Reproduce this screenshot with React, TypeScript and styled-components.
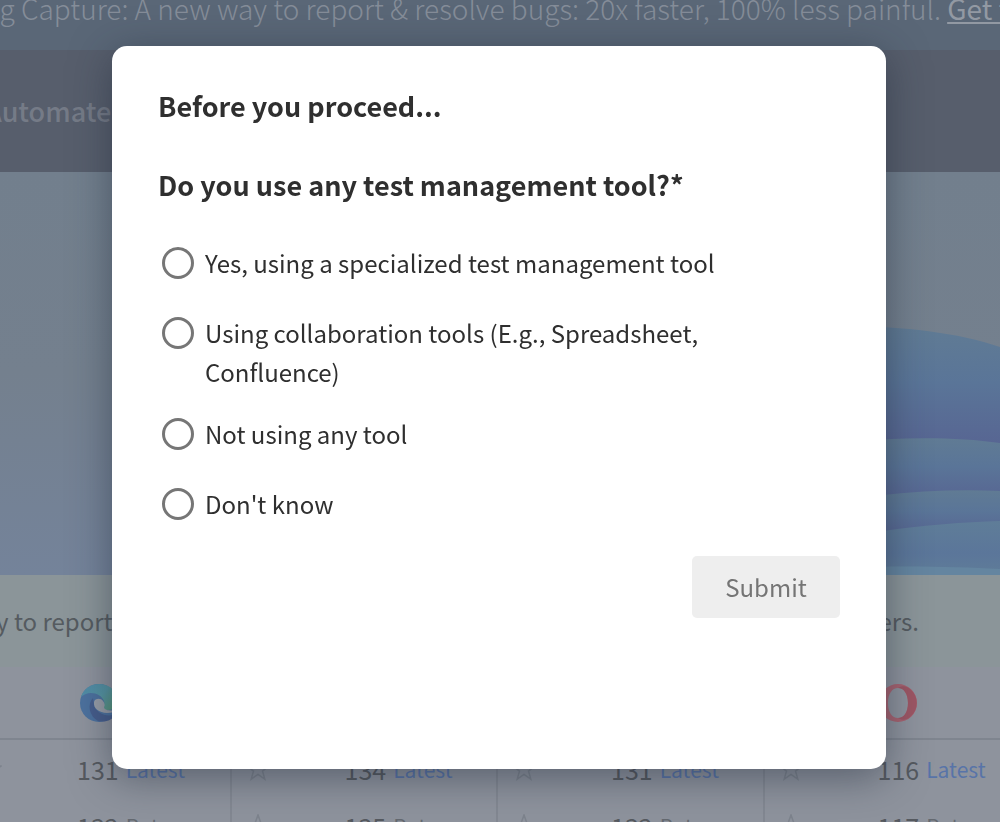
import React, { useState } from "react";
import styled, { createGlobalStyle } from "styled-components";

const GlobalStyle = createGlobalStyle`
  * { box-sizing: border-box; }
  body {
    margin: 0;
    background: #8e939d;
    color: #55595f;
    font-family: "Noto Sans CJK SC", "Open Sans", sans-serif;
  }
`;

const Page = styled.div`
  height: 100vh;
  overflow: hidden;
`;

const Banner = styled.div`
  display: flex;
  align-items: flex-end;
  height: 50px;
  padding-bottom: 22px;
  background: #5a6777;
  color: #858d99;
  font-size: 28px;
  line-height: 40px;
  font-weight: 300;
  white-space: nowrap;
`;

const BannerText = styled.p`
  margin: 0 0 0 -35px;
`;

const BannerLink = styled.a`
  color: #9299a3;
  font-weight: 400;
  text-decoration: underline;
`;

const Nav = styled.nav`
  display: flex;
  align-items: center;
  height: 122px;
  background: #575e6c;
`;

const NavLink = styled.a`
  margin-left: -15px;
  color: #757b87;
  font-size: 27px;
  line-height: 40px;
  font-weight: 500;
  text-decoration: none;
`;

const Hero = styled.section`
  display: flex;
  justify-content: flex-end;
  align-items: flex-end;
  height: 403px;
  background: linear-gradient(#727f8d, #74808e 50%, #74839a);
`;

const Strip = styled.p`
  display: flex;
  justify-content: space-between;
  margin: 0;
  padding: 26px 81px 26px 0;
  background: #8b9599;
  color: #555b60;
  font-size: 24px;
  line-height: 40px;
  white-space: nowrap;
`;

const StripLead = styled.span`
  margin-left: -4px;
`;

const VersionTable = styled.table`
  width: calc(100% + 67px);
  margin-left: -36px;
  border-collapse: collapse;
  table-layout: fixed;
`;

const LogoCell = styled.th`
  height: 72px;
  padding: 0 0 0 115px;
  border-bottom: 2px solid #7f858f;
  text-align: left;
  vertical-align: middle;
  svg { display: block; }
`;

const VersionCell = styled.td`
  padding: 0;
  border-right: 2px solid #838892;
`;

const Version = styled.div`
  display: flex;
  align-items: center;
  height: 57px;
  padding: 1px 0 0 14px;
  svg { margin-right: 75px; }
`;

const VersionNumber = styled.span`
  margin-right: 7px;
  font-size: 25px;
  line-height: 40px;
`;

const VersionTag = styled.span<{ $latest?: boolean }>`
  color: ${(p) => (p.$latest ? "#5874a8" : "#646970")};
  font-size: 21px;
  line-height: 40px;
`;

const Overlay = styled.div`
  position: fixed;
  inset: 0;
  display: flex;
  justify-content: center;
  align-items: flex-start;
  padding: 46px 114px 53px 112px;
`;

const Dialog = styled.form`
  display: flex;
  flex-direction: column;
  width: 100%;
  max-width: 880px;
  min-height: 100%;
  padding: 40px 46px;
  border-radius: 15px;
  background: #fff;
  box-shadow: 0 8px 40px rgba(30, 40, 55, 0.5);
  color: #2f2f2f;
`;

const Title = styled.h1`
  margin: 0 0 39px;
  font-size: 27px;
  line-height: 40px;
  font-weight: 700;
`;

const Question = styled.fieldset`
  display: flex;
  flex-direction: column;
  min-width: 0;
  margin: 0;
  padding: 0;
  border: 0;
`;

const Legend = styled.legend`
  padding: 0;
  margin-bottom: 38px;
  font-size: 27px;
  line-height: 40px;
  font-weight: 700;
`;

const Option = styled.label<{ $tight?: boolean }>`
  display: flex;
  align-items: flex-start;
  gap: 11px;
  margin-bottom: ${(p) => (p.$tight ? "23px" : "31px")};
  padding: 0 40px 0 4px;
  font-size: 24px;
  line-height: 39px;
`;

const Radio = styled.input`
  appearance: none;
  flex: none;
  width: 32px;
  height: 32px;
  margin: 4px 0 0;
  border: 3px solid #767676;
  border-radius: 50%;
  background: #fff;
  &:checked { box-shadow: inset 0 0 0 5px #fff; background: #767676; }
`;

const SubmitButton = styled.button`
  align-self: flex-end;
  width: 148px;
  height: 62px;
  margin-top: 2px;
  border: 0;
  border-radius: 5px;
  background: #eee;
  color: #757575;
  font-family: inherit;
  font-size: 24px;
  line-height: 40px;
`;

const Waves = () => (
  <svg width="260" height="250" viewBox="0 0 260 250" aria-hidden="true">
    <defs>
      <linearGradient id="wave" x1="0" y1="0" x2="0" y2="1">
        <stop offset="0" stopColor="#607b94" />
        <stop offset="0.45" stopColor="#5a7598" />
        <stop offset="1" stopColor="#576492" />
      </linearGradient>
      <linearGradient id="base" x1="0" y1="0" x2="0" y2="1">
        <stop offset="0" stopColor="#5f7d98" />
        <stop offset="0.6" stopColor="#5b769a" />
        <stop offset="1" stopColor="#5f7c98" />
      </linearGradient>
    </defs>
    <path fill="url(#wave)" d="M0 10C80 -4 190 -2 260 22V126H0Z" />
    <path fill="url(#wave)" d="M0 134C90 114 190 108 260 118V176H0Z" />
    <path fill="url(#wave)" d="M0 194C90 174 180 162 260 166V212H0Z" />
    <path fill="url(#base)" d="M0 232C90 212 180 198 260 196V250H0Z" />
    <path fill="#6485a0" d="M0 250C90 240 190 240 260 244V250Z" />
  </svg>
);

const EdgeLogo = () => (
  <svg width="40" height="40" viewBox="0 0 40 40" role="img" aria-label="Edge">
    <defs>
      <linearGradient id="edgeTop" x1="0" y1="0" x2="1" y2="0.6">
        <stop offset="0" stopColor="#4f88a8" />
        <stop offset="0.6" stopColor="#5595a3" />
        <stop offset="1" stopColor="#58967f" />
      </linearGradient>
    </defs>
    <circle cx="20" cy="20" r="19" fill="#4c719e" />
    <path fill="url(#edgeTop)" d="M2 14C5 5 12 1 20 1c11 0 19 8 19 17 0 6-5 9-10 9-4 0-6-1-5-3 1-1 2-3 1-6-2-5-7-8-13-8-4 0-8 2-10 4Z" />
    <path fill="#465d8c" d="M14 15c-6 6-4 18 5 23 7 2 15-1 18-7-9 4-20-1-22-9Z" />
    <path fill="#989da7" d="M25 24c1-1 1-4-1-6-2-3-8-3-9 1-1 8 8 13 20 10l2-2c-3 1-12 1-12-3Z" />
  </svg>
);

const OperaLogo = () => (
  <svg width="40" height="40" viewBox="0 0 40 40" role="img" aria-label="Opera">
    <path fill="#a96370" fillRule="evenodd" d="M19 1a19 19 0 1 0 0 38a19 19 0 1 0 0-38ZM19 5c6 0 10 6 10 15s-4 15-10 15-10-6-10-15 4-15 10-15Z" />
    <path fill="#9d5664" d="M19 5c4-3 9-2 12 1 9 7 9 21 0 28-3 3-8 4-12 1 6 0 10-6 10-15S25 5 19 5Z" />
  </svg>
);

const Star = () => (
  <svg width="24" height="24" viewBox="0 0 24 24" fill="none" stroke="#7d838d" strokeWidth="1.5" aria-hidden="true">
    <path d="M12 1l2.8 7.8 8.2.3-6.5 5 2.3 8L12 17.400l-6.800 4.700 2.300-8L1 9.100l8.200-.3Z" />
  </svg>
);

const versions = [
  [131, 134, 131, 116],
  [132, 135, 132, 117],
];
const tags = ["Latest", "Beta"];
const options = [
  "Yes, using a specialized test management tool",
  "Using collaboration tools (E.g., Spreadsheet, Confluence)",
  "Not using any tool",
  "Don't know",
];

export default function App() {
  const [choice, setChoice] = useState<string | null>(null);
  return (
    <>
      <GlobalStyle />
      <Page>
        <Banner>
          <BannerText>
            Bug Capture: A new way to report &amp; resolve bugs: 20x faster, 100% less painful.{" "}
            <BannerLink href="#capture">Get f</BannerLink>
          </BannerText>
        </Banner>
        <Nav>
          <NavLink href="#automate">Automate</NavLink>
        </Nav>
        <Hero>
          <Waves />
        </Hero>
        <Strip>
          <StripLead>y to report</StripLead>
          <span>ers.</span>
        </Strip>
        <VersionTable>
          <thead>
            <tr>
              <LogoCell><EdgeLogo /></LogoCell>
              <LogoCell />
              <LogoCell />
              <LogoCell><OperaLogo /></LogoCell>
            </tr>
          </thead>
          <tbody>
            {versions.map((row, r) => (
              <tr key={r}>
                {row.map((n, c) => (
                  <VersionCell key={c}>
                    <Version>
                      <Star />
                      <VersionNumber>{n}</VersionNumber>
                      <VersionTag $latest={r === 0}>{tags[r]}</VersionTag>
                    </Version>
                  </VersionCell>
                ))}
              </tr>
            ))}
          </tbody>
        </VersionTable>
      </Page>
      <Overlay>
        <Dialog role="dialog" aria-labelledby="dialog-title" onSubmit={(e) => e.preventDefault()}>
          <Title id="dialog-title">Before you proceed...</Title>
          <Question>
            <Legend>Do you use any test management tool?*</Legend>
            {options.map((text, i) => (
              <Option key={text} $tight={i === 1}>
                <Radio
                  type="radio"
                  name="tool"
                  value={text}
                  checked={choice === text}
                  onChange={() => setChoice(text)}
                />
                <span>{text}</span>
              </Option>
            ))}
          </Question>
          <SubmitButton type="submit" disabled={choice === null}>Submit</SubmitButton>
        </Dialog>
      </Overlay>
    </>
  );
}
